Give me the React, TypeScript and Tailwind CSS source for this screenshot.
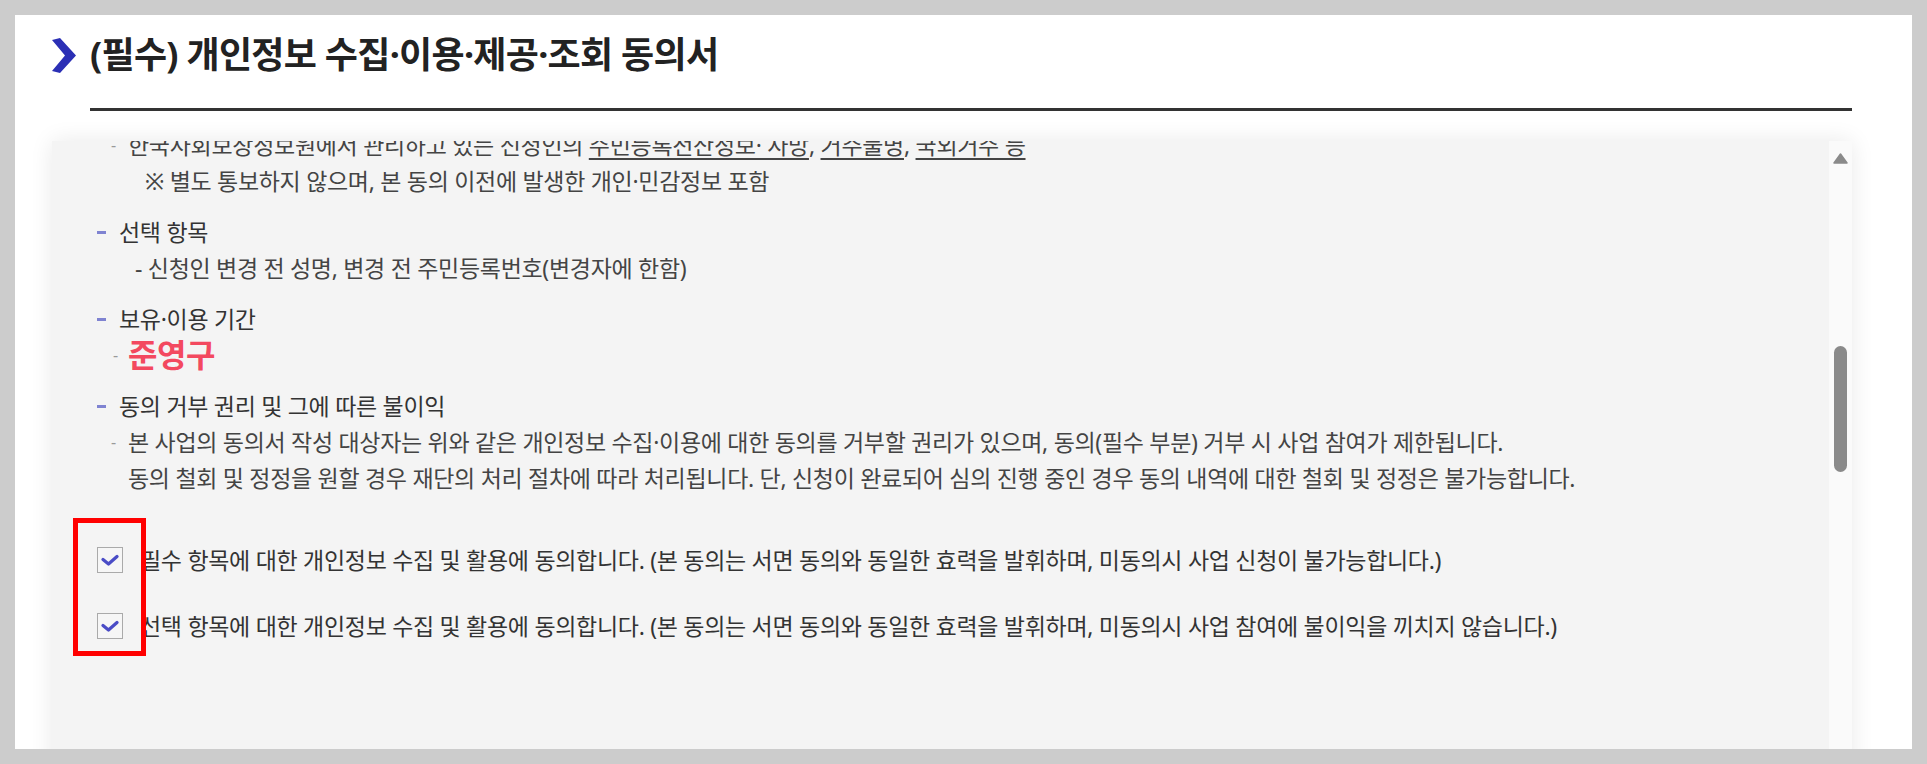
const font = { fontFamily: '"Noto Sans", "Noto Sans CJK KR", sans-serif' }

function SectionHead({ children }: { children: React.ReactNode }) {
  return (
    <div className="flex items-center mt-[15px] text-[#333]">
      <span className="w-[9px] h-[3px] bg-[#7f83d1] mr-[13px]" />
      {children}
    </div>
  )
}

function GrayDash() {
  return <span className="inline-block align-top w-[17px] text-[16px] leading-[36px] text-[#999]">-</span>
}

function Check({ children }: { children: React.ReactNode }) {
  return (
    <div className="flex items-center h-[26px] text-[#333]">
      <span className="w-[26px] h-[26px] border border-[#aaa] bg-[#f6f6f6] flex items-center justify-center mr-[17px] shrink-0">
        <svg width="18" height="13" viewBox="0 0 18 13">
          <path d="M2 5.5 L7.5 10 L16 2.5" fill="none" stroke="#4a4cc6" strokeWidth="3.2" strokeLinecap="round" strokeLinejoin="round" />
        </svg>
      </span>
      {children}
    </div>
  )
}

export default function App() {
  return (
    <div className="h-[764px] w-full bg-[#cccccc] p-[15px] overflow-hidden" style={font}>
      <div className="h-full bg-white overflow-hidden pl-[37px] pr-[60px]">
        <div className="flex items-center h-[40px] mt-[20px]">
          <svg width="24" height="35" viewBox="0 0 24 35" className="mr-[14px] shrink-0">
            <polygon points="0,2 8,0 24,17.5 8,35 0,33 13,17.5" fill="#2b2fb5" />
          </svg>
          <h1 className="text-[36px] font-bold tracking-[-0.7px] text-[#222] leading-[40px]">
            (필수) 개인정보 수집·이용·제공·조회 동의서
          </h1>
        </div>
        <div className="ml-[38px] mt-[33px] h-[3px] bg-[#333]" />

        <div className="mt-[30px] h-[640px] flex shadow-[0_0_22px_rgba(0,0,0,0.09)]">
          <div className="flex-1 bg-[#f4f4f4] overflow-hidden pl-[45px] text-[23px] tracking-[-0.3px] leading-[36px] text-[#444]">
            <div className="-mt-[14px]">
              <div className="ml-[14px] h-[36px]">
                <GrayDash />
                한국사회보장정보원에서 관리하고 있는 신청인의{' '}
                <span className="underline underline-offset-4">주민등록전산정보· 사망</span>,{' '}
                <span className="underline underline-offset-4">거주불명</span>,{' '}
                <span className="underline underline-offset-4">국외거주 등</span>
              </div>
              <div className="ml-[48px]">※ 별도 통보하지 않으며, 본 동의 이전에 발생한 개인·민감정보 포함</div>

              <SectionHead>선택 항목</SectionHead>
              <div className="ml-[38px]">- 신청인 변경 전 성명, 변경 전 주민등록번호(변경자에 한함)</div>

              <SectionHead>보유·이용 기간</SectionHead>
              <div className="ml-[16px] flex items-center h-[36px]">
                <span className="w-[15px] text-[16px] text-[#999]">-</span>
                <span className="text-[32px] font-bold text-[#f3495f] tracking-[-0.5px] leading-[36px]">준영구</span>
              </div>

              <SectionHead>동의 거부 권리 및 그에 따른 불이익</SectionHead>
              <div className="ml-[14px] h-[36px]">
                <GrayDash />
                본 사업의 동의서 작성 대상자는 위와 같은 개인정보 수집·이용에 대한 동의를 거부할 권리가 있으며, 동의(필수 부분) 거부 시 사업 참여가 제한됩니다.
              </div>
              <div className="ml-[31px]">
                동의 철회 및 정정을 원할 경우 재단의 처리 절차에 따라 처리됩니다. 단, 신청이 완료되어 심의 진행 중인 경우 동의 내역에 대한 철회 및 정정은 불가능합니다.
              </div>

              <div className="relative mt-[51px] flex flex-col gap-[40px]">
                <Check>
                  필수 항목에 대한 개인정보 수집 및 활용에 동의합니다. (본 동의는 서면 동의와 동일한 효력을 발휘하며, 미동의시 사업 신청이 불가능합니다.)
                </Check>
                <Check>
                  선택 항목에 대한 개인정보 수집 및 활용에 동의합니다. (본 동의는 서면 동의와 동일한 효력을 발휘하며, 미동의시 사업 참여에 불이익을 끼치지 않습니다.)
                </Check>
                <div className="absolute -left-[24px] -top-[29px] w-[73px] h-[138px] border-[5px] border-[#ff0000]" />
              </div>
            </div>
          </div>
          <div className="w-[23px] bg-[#fafafa] flex flex-col items-center">
            <svg width="15" height="11" viewBox="0 0 15 11" className="mt-[12px]">
              <path d="M7.5 1 L14 10 L1 10 Z" fill="#8a8a8a" stroke="#8a8a8a" strokeWidth="1.5" strokeLinejoin="round" />
            </svg>
            <div className="mt-[182px] w-[13px] h-[126px] rounded-full bg-[#8a8a8a]" />
          </div>
        </div>
      </div>
    </div>
  )
}
